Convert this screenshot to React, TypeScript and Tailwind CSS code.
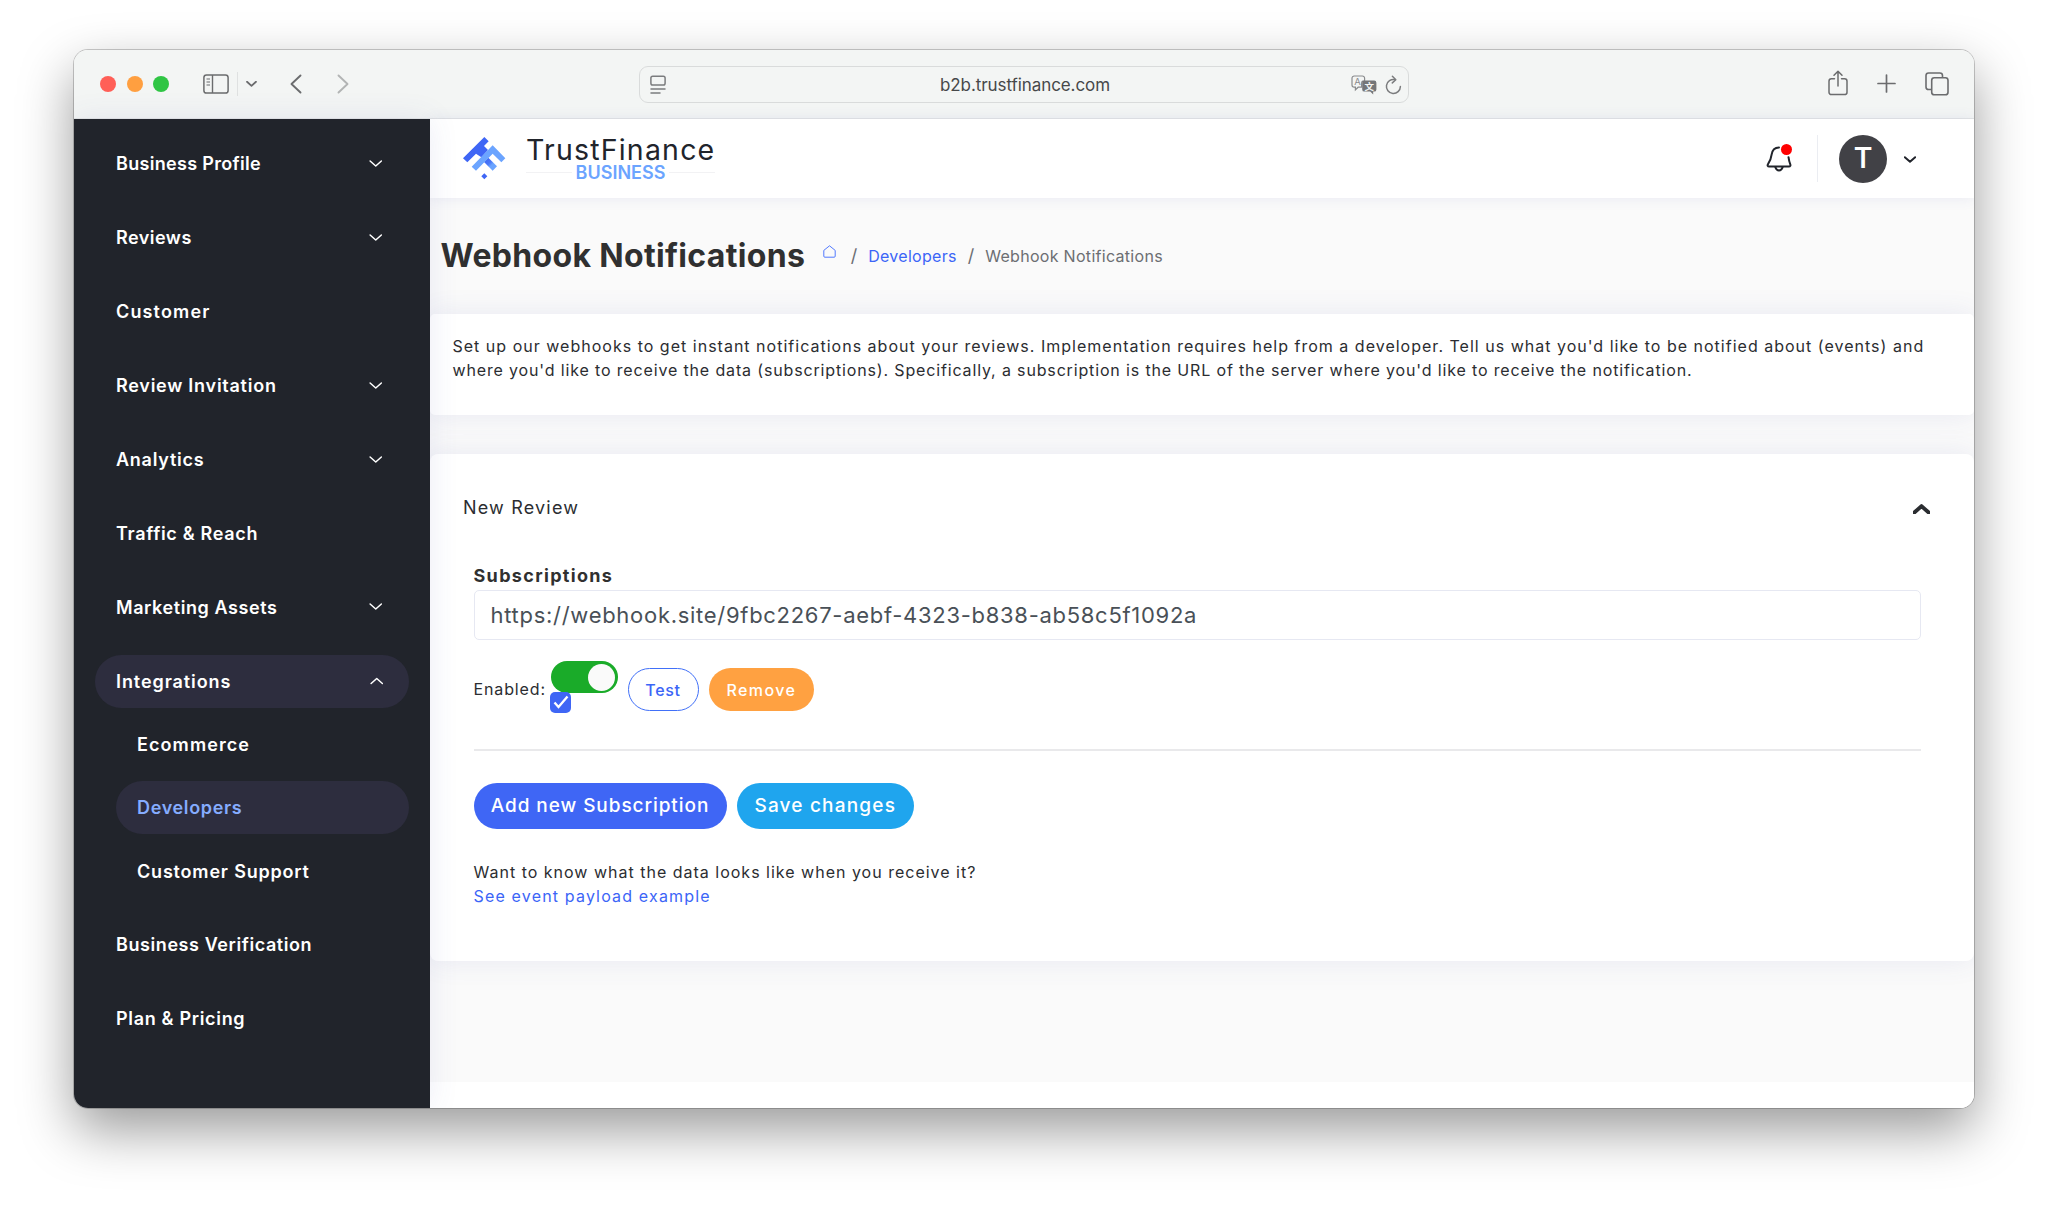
import { useState } from "react";
import { clsx } from "clsx";

interface NavChild {
  label: string;
  tracking: string;
  active?: boolean;
}

interface NavItem {
  label: string;
  tracking: string;
  expandable?: boolean;
  children?: NavChild[];
}

const NAV: NavItem[] = [
  { label: "Business Profile", tracking: "tracking-[0.31px]", expandable: true },
  { label: "Reviews", tracking: "tracking-[0.47px]", expandable: true },
  { label: "Customer", tracking: "tracking-[1.15px]" },
  { label: "Review Invitation", tracking: "tracking-[0.75px]", expandable: true },
  { label: "Analytics", tracking: "tracking-[0.75px]", expandable: true },
  { label: "Traffic & Reach", tracking: "tracking-[0.68px]" },
  { label: "Marketing Assets", tracking: "tracking-[0.58px]", expandable: true },
  {
    label: "Integrations",
    tracking: "tracking-[0.92px]",
    expandable: true,
    children: [
      { label: "Ecommerce", tracking: "tracking-[1.09px]" },
      { label: "Developers", tracking: "tracking-[0.66px]", active: true },
      { label: "Customer Support", tracking: "tracking-[0.81px]" },
    ],
  },
  { label: "Business Verification", tracking: "tracking-[0.58px]" },
  { label: "Plan & Pricing", tracking: "tracking-[0.68px]" },
];

function Chevron({ up, className }: { up?: boolean; className?: string }) {
  return (
    <svg viewBox="0 0 14 8" fill="none" stroke="currentColor" strokeLinecap="round" strokeLinejoin="round" className={className}>
      <path d={up ? "M1 7l6-5.4L13 7" : "M1 1l6 5.4L13 1"} />
    </svg>
  );
}

function BrowserToolbar() {
  return (
    <div className="flex h-[69px] shrink-0 items-center border-b border-[#e3e5e5] bg-[#f3f5f4] pl-[26px] pr-[25px] text-[#6b6c6e]">
      <div className="flex w-[539px] items-center">
        <div className="flex gap-[10.5px]">
          <span className="size-4 rounded-full bg-[#ff5f57]" />
          <span className="size-4 rounded-full bg-[#ff9f40]" />
          <span className="size-4 rounded-full bg-[#2fc544]" />
        </div>
        <svg viewBox="0 0 26 20" fill="none" stroke="currentColor" className="ml-[34px] h-5 w-[26px]">
          <rect x="0.9" y="0.9" width="24.2" height="18.2" rx="2.6" strokeWidth="1.5" />
          <path d="M9.5 1v18" strokeWidth="1.4" />
          <path d="M3.5 5h3.5M3.5 8h3.5M3.5 11h3.5" strokeWidth="1.1" />
        </svg>
        <span className="ml-[8px] h-6 w-px bg-[#dfe1e1]" />
        <Chevron className="ml-[8px] h-[6px] w-[11px] stroke-[2.4]" />
        <svg viewBox="0 0 12 20" fill="none" stroke="currentColor" strokeWidth="1.9" strokeLinecap="round" strokeLinejoin="round" className="ml-[33px] h-5 w-3">
          <path d="M10.5 1.5L1.5 10l9 8.5" />
        </svg>
        <svg viewBox="0 0 12 20" fill="none" stroke="#b2b4b4" strokeWidth="1.9" strokeLinecap="round" strokeLinejoin="round" className="ml-[35px] h-5 w-3">
          <path d="M1.5 1.5l9 8.5-9 8.5" />
        </svg>
      </div>
      <div className="flex h-[37px] w-[770px] items-center justify-between rounded-[9px] border-[1.5px] border-[#d9dbdb] pl-[10px] pr-[6px]">
        <svg viewBox="0 0 16 20" fill="none" stroke="#7b7c7e" strokeWidth="1.5" strokeLinecap="round" className="mt-px h-5 w-4">
          <rect x="0.9" y="1.2" width="14.2" height="8.8" rx="1.8" />
          <path d="M1 14h14M1 18h9" />
        </svg>
        <span className="ml-[33px] mt-[3px] text-[17px] tracking-[-0.08px] text-[#47484a]">b2b.trustfinance.com</span>
        <div className="mt-px flex items-center gap-[8px]">
          <svg viewBox="0 0 26 20" className="h-5 w-[26px]">
            <path
              d="M3.2 1h8.2a2.2 2.2 0 0 1 2.2 2.2v2.6H13a2.4 2.4 0 0 0-2.4 2.4v4H7.2l-2.8 2.6v-2.6H3.2A2.2 2.2 0 0 1 1 10V3.2A2.2 2.2 0 0 1 3.2 1z"
              fill="none"
              stroke="#8a8b8d"
              strokeWidth="1.2"
            />
            <path d="M13.4 5.6h9.8a2.2 2.2 0 0 1 2.2 2.2v6.6a2.2 2.2 0 0 1-2.2 2.2h-1v2.8l-3-2.8h-5.8a2.2 2.2 0 0 1-2.2-2.2V7.8a2.2 2.2 0 0 1 2.2-2.2z" fill="#757678" />
            <text x="3.2" y="10.4" fontSize="9.5" fill="#8a8b8d">A</text>
            <text x="13.5" y="14.8" fontSize="9.5" fontWeight="700" fill="#f3f5f4" fontFamily="Noto Sans CJK SC, sans-serif">文</text>
          </svg>
          <svg viewBox="0 0 17 20" fill="none" stroke="#7b7c7e" strokeWidth="1.5" strokeLinecap="round" strokeLinejoin="round" className="h-5 w-[17px]">
            <path d="M10 4.6A7 7 0 1 0 15.4 11.5" />
            <path d="M7.4 1.2l3.4 3.5-3.5 3.2" />
          </svg>
        </div>
      </div>
      <div className="ml-auto flex items-center gap-[29px]">
        <svg viewBox="0 0 20 26" fill="none" stroke="currentColor" strokeWidth="1.5" strokeLinecap="round" strokeLinejoin="round" className="-mt-[2px] h-[26px] w-5">
          <path d="M6.5 8.8H3.4A2.4 2.4 0 0 0 1 11.2v11A2.4 2.4 0 0 0 3.4 24.6h13.2a2.4 2.4 0 0 0 2.4-2.4v-11a2.4 2.4 0 0 0-2.4-2.4h-3.1" />
          <path d="M10 16V1.4M6 5.2l4-3.9 4 3.9" />
        </svg>
        <svg viewBox="0 0 19 19" fill="none" stroke="currentColor" strokeWidth="1.7" strokeLinecap="round" className="-mt-px size-[19px]">
          <path d="M9.5 1v17M1 9.5h17" />
        </svg>
        <svg viewBox="0 0 24 24" fill="none" stroke="currentColor" strokeWidth="1.6" strokeLinejoin="round" className="-mt-px size-6">
          <path d="M6.5 17.5H3.6A2.6 2.6 0 0 1 1 14.9V3.6A2.6 2.6 0 0 1 3.6 1h11.3a2.6 2.6 0 0 1 2.6 2.6v2" />
          <rect x="6.7" y="5.8" width="16.3" height="17" rx="2.6" />
        </svg>
      </div>
    </div>
  );
}

function Sidebar() {
  return (
    <aside className="relative z-10 flex w-[356px] shrink-0 flex-col gap-[21.1px] bg-[#21242b] px-[21px] pt-[18.5px] text-[18px] font-semibold text-white shadow-[0_0_28px_rgba(70,80,170,0.1)]">
      {NAV.map((item) => (
        <div key={item.label} className="flex flex-col gap-[10.5px]">
          <a
            className={clsx(
              "flex h-[52.8px] items-center justify-between rounded-full pl-[21px]",
              item.children ? "bg-[#2d2d3e] pr-[26px]" : "pr-[27px]",
            )}
          >
            <span className={item.tracking}>{item.label}</span>
            {item.expandable && <Chevron up={!!item.children} className="h-[7.5px] w-[13.5px] stroke-[1.6]" />}
          </a>
          {item.children?.map((child) => (
            <a
              key={child.label}
              className={clsx(
                "ml-[21px] flex h-[52.8px] items-center rounded-full pl-[21px]",
                child.active && "bg-[#2d2d3e] text-[#85acff]",
              )}
            >
              <span className={child.tracking}>{child.label}</span>
            </a>
          ))}
        </div>
      ))}
    </aside>
  );
}

function Logo() {
  return (
    <div className="flex items-start">
      <svg viewBox="0 0 180 168" className="h-14 w-[60px]">
        <defs>
          <linearGradient id="fold" x1="88" y1="88" x2="114" y2="114" gradientUnits="userSpaceOnUse">
            <stop offset="0" stopColor="#3f66f5" />
            <stop offset="0.45" stopColor="#4a78f8" />
            <stop offset="0.7" stopColor="#6ba4ff" />
          </linearGradient>
        </defs>
        <path d="M85 21l13 13-14 14 12 12-20 22-16-11-26 26-13-12z" fill="#3f66f5" />
        <path d="M97 83l26 26-13 13-26-26z" fill="url(#fold)" />
        <path d="M110 46l38 39-12 12-26-26-50 51-13-12z" fill="#6ba4ff" />
        <path d="M85 130l9 9-9 9-9-9z" fill="#3f66f5" />
      </svg>
      <div className="ml-[10px] mt-[3px] w-[189px]">
        <div className="h-[34px] whitespace-nowrap text-[28.5px] leading-[34px] tracking-[1.2px] text-[#21242b]">TrustFinance</div>
        <div className="-mt-[4.5px] flex items-center gap-[4px]">
          <span className="h-[1.5px] flex-1 bg-[#f2f2f4]" />
          <span className="text-[18px] font-semibold leading-[20px] text-[#6ba4ff]">BUSINESS</span>
          <span className="h-[1.5px] flex-1 bg-[#f2f2f4]" />
        </div>
      </div>
    </div>
  );
}

function Header() {
  return (
    <header className="flex h-[79px] shrink-0 items-center bg-white pl-[26px] pr-[58px] shadow-[0_0_13px_rgba(70,80,170,0.1)]">
      <div className="h-[57px]">
        <Logo />
      </div>
      <div className="ml-auto flex items-center">
        <div className="relative">
          <svg viewBox="0 0 26 26" fill="none" stroke="#21242b" strokeWidth="2" strokeLinecap="round" strokeLinejoin="round" className="size-[26px]">
            <path d="M13 1.5c-4.300 0-6.800 3-7.400 7.200C5.100 12.500 4.400 15 2 18.200c-.8 1.300-.3 2.400 1.100 2.400h19.800c1.400 0 1.900-1.100 1.300-2.400-.9-2-1.300-4.200-1.700-7" />
            <path d="M9.300 21c.6 2.200 1.900 3.400 3.700 3.400s3.100-1.200 3.700-3.400" />
          </svg>
          <span className="absolute -top-[1.5px] right-[-0.5px] size-[11px] rounded-full bg-[#ff0000]" />
        </div>
        <span className="ml-[25.5px] h-[47px] w-px bg-[#ebedf2]" />
        <span className="ml-[21px] flex size-[48px] items-center justify-center rounded-full bg-[#414146] font-[Roboto] text-[29px] font-medium text-white">T</span>
        <Chevron className="ml-[17px] mt-[2px] h-[7.5px] w-[12px] stroke-[2.3] text-[#21242b]" />
      </div>
    </header>
  );
}

function PageTitle() {
  return (
    <div className="flex h-[116px] shrink-0 items-center pl-[10.5px]">
      <h1 className="text-[32px] font-bold tracking-[0.33px] text-[#303030]">Webhook Notifications</h1>
      <nav className="-mt-px ml-[18px] flex items-center text-[16px] text-[#6c6e72]">
        <svg viewBox="0 0 13 13" fill="none" stroke="#3f6bff" strokeWidth="0.9" strokeLinejoin="round" className="-mt-[8px] size-[13px]">
          <path d="M0.8 5.4L6.5 0.8l5.7 4.6v5.8a1 1 0 0 1-1 1H1.8a1 1 0 0 1-1-1z" />
        </svg>
        <span className="ml-[14.5px] text-[18px]">/</span>
        <a className="ml-[11px] tracking-[0.28px] text-[#3b65f7]">Developers</a>
        <span className="ml-[11px] text-[18px]">/</span>
        <span className="ml-[11px] tracking-[0.3px]">Webhook Notifications</span>
      </nav>
    </div>
  );
}

function IntroCard() {
  return (
    <section className="h-[100.5px] shrink-0 rounded-[5px] bg-white pl-[22.5px] pt-[21px] text-[16px] leading-[23.7px] shadow-[0_0_28px_rgba(70,80,170,0.1)]">
      <p className="whitespace-nowrap tracking-[1.01px]">
        Set up our webhooks to get instant notifications about your reviews. Implementation requires help from a developer. Tell us what you'd like to be notified about (events) and
      </p>
      <p className="whitespace-nowrap tracking-[0.85px]">
        where you'd like to receive the data (subscriptions). Specifically, a subscription is the URL of the server where you'd like to receive the notification.
      </p>
    </section>
  );
}

function EnabledSwitch() {
  const [enabled, setEnabled] = useState(true);

  return (
    <div className="-mt-[7px] ml-[5px] h-[53px] w-[67px] cursor-pointer" onClick={() => setEnabled(!enabled)}>
      <div className={clsx("flex h-8 w-[67px] items-center rounded-full px-[2.5px]", enabled ? "justify-end bg-[#1aab29]" : "bg-zinc-300")}>
        <span className="size-[27px] rounded-full bg-[#fafafa]" />
      </div>
      <span className="relative -mt-[1.5px] -ml-[1px] flex size-[21.5px] items-center justify-center rounded-[5px] bg-[#3f66f5]">
        {enabled && (
          <svg viewBox="0 0 16 14" fill="none" stroke="#fff" strokeWidth="2.3" className="h-[14px] w-4">
            <path d="M1.5 7.5l4 4.5L14.5 1.5" />
          </svg>
        )}
      </span>
    </div>
  );
}

function SubscriptionCard() {
  const [url, setUrl] = useState("https://webhook.site/9fbc2267-aebf-4323-b838-ab58c5f1092a");

  return (
    <section className="mt-[39.5px] h-[507px] shrink-0 rounded-[8px] bg-white shadow-[0_0_28px_rgba(70,80,170,0.1)]">
      <div className="flex h-[107px] items-center justify-between pl-[33px] pr-[44px]">
        <h2 className="text-[18px] tracking-[1.18px]">New Review</h2>
        <Chevron up className="mt-[3px] h-[10px] w-[17px] stroke-[3.2]" />
      </div>
      <div className="pl-[43.5px] pr-[53px]">
        <label className="block h-[29px] text-[18px] font-bold leading-[29px] tracking-[1.33px] text-[#303030]">Subscriptions</label>
        <input
          value={url}
          onChange={(e) => setUrl(e.target.value)}
          className="block h-[50px] w-full rounded-[5px] border border-[#e6e8f2] bg-white pl-[16px] text-[22px] tracking-[0.71px] text-[#495057]"
        />
        <div className="mt-[28px] flex h-[43px] items-start text-[16px]">
          <span className="leading-[42px] tracking-[0.87px]">Enabled:</span>
          <EnabledSwitch />
          <button className="ml-[10px] h-[43px] w-[71px] rounded-full border-[1.5px] border-[#4170f8] pr-px font-medium tracking-[0.63px] text-[#3b65f7]">Test</button>
          <button className="ml-[10px] h-[43px] w-[105px] rounded-full bg-[#ffa141] font-medium tracking-[1.4px] text-white">Remove</button>
        </div>
        <hr className="mt-[38px] border-t-2 border-[#e9e9eb]" />
        <div className="mt-[32px] flex gap-[10.5px] text-[19px] font-medium text-white">
          <button className="h-[46px] w-[253px] rounded-full bg-[#3f66f5] tracking-[0.93px]">Add new Subscription</button>
          <button className="h-[46px] w-[176.5px] rounded-full bg-[#1fa5ee] tracking-[1.19px]">Save changes</button>
        </div>
        <div className="mt-[32px] text-[16px] leading-[23.7px]">
          <p className="tracking-[1px]">Want to know what the data looks like when you receive it?</p>
          <a className="tracking-[1.17px] text-[#3b65f7]">See event payload example</a>
        </div>
      </div>
    </section>
  );
}

export default function App() {
  return (
    <div className="h-[1206px] w-[2048px] overflow-hidden bg-white pl-[74px] pt-[50px] font-[Inter,sans-serif] text-[#2b2d31]">
      <div className="h-[1058px] w-[1900px] rounded-[14px] shadow-[0_0_0_1px_rgba(0,0,0,0.2),0_22px_54px_rgba(0,0,0,0.4)]">
        <div className="flex h-full flex-col overflow-hidden rounded-[14px]">
          <BrowserToolbar />
          <div className="flex min-h-0 flex-1">
            <Sidebar />
            <main className="flex min-w-0 flex-1 flex-col bg-[#fafafa]">
              <Header />
              <PageTitle />
              <IntroCard />
              <SubscriptionCard />
              <footer className="mt-auto h-[26px] shrink-0 bg-white" />
            </main>
          </div>
        </div>
      </div>
    </div>
  );
}
